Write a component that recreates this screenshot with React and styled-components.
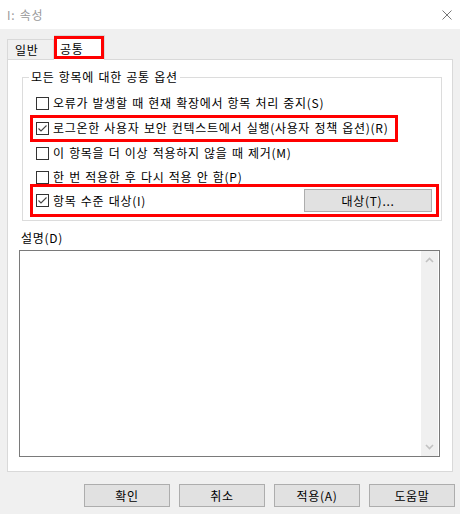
import React from 'react'
import styled, { createGlobalStyle } from 'styled-components'

const GlobalStyle = createGlobalStyle`
  html, body {
    margin: 0;
    padding: 0;
    background: #f0f0f0;
  }
  body {
    font-family: "Noto Sans CJK KR", "Noto Sans", sans-serif;
    font-size: 12px;
    letter-spacing: 0.7px;
    word-spacing: 1px;
    color: #000;
  }
`

const Window = styled.div`
  width: 460px;
  height: 514px;
  display: flex;
  flex-direction: column;
  background: #f0f0f0;
  overflow: hidden;
`

const TitleBar = styled.div`
  height: 29px;
  background: #fff;
  display: flex;
  align-items: center;
  justify-content: space-between;
  padding: 0 8px 0 7px;
`

const Title = styled.span`
  color: #9a9a9a;
  line-height: 16px;
`

const CloseIcon = () => (
  <svg width="10" height="10" viewBox="0 0 10 10">
    <path d="M0.5 0.5 L9.5 9.5 M9.5 0.5 L0.5 9.5" stroke="#777" strokeWidth="1" fill="none" />
  </svg>
)

const Body = styled.div`
  padding: 0 7px;
  display: flex;
  flex-direction: column;
`

const TabStrip = styled.div`
  height: 30px;
  display: flex;
  align-items: flex-end;
`

const Tab = styled.div`
  position: relative;
  box-sizing: border-box;
  width: ${({ w }) => w}px;
  height: ${({ active }) => (active ? '25px' : '20px')};
  margin-bottom: ${({ active }) => (active ? '-1px' : '0')};
  padding-left: ${({ active }) => (active ? '6px' : '7px')};
  border: 1px solid #d9d9d9;
  border-bottom: none;
  border-left: ${({ active }) => (active ? 'none' : '1px solid #d9d9d9')};
  background: ${({ active }) => (active ? '#fff' : '#f0f0f0')};
  z-index: ${({ active }) => (active ? 1 : 0)};
  display: flex;
  align-items: center;

  ${({ highlight }) =>
    highlight &&
    `
    &::after {
      content: '';
      position: absolute;
      left: 0;
      top: 0;
      right: 0;
      bottom: 1px;
      border: 3px solid #ff0000;
    }
  `}
`

const Panel = styled.div`
  box-sizing: border-box;
  height: 413px;
  background: #fff;
  border: 1px solid #d9d9d9;
  display: flex;
  flex-direction: column;
`

const GroupBox = styled.fieldset`
  margin: 9px 10px 0 14px;
  padding: 0 9px 8px 6px;
  border: 1px solid #dcdcdc;
  min-width: 0;
`

const Legend = styled.legend`
  padding: 0 2px;
  line-height: 16px;
`

const Rows = styled.div`
  padding: 6px 0 0 7px;
  display: flex;
  flex-direction: column;
`

const Row = styled.div`
  position: relative;
  height: ${({ h }) => h}px;
  display: flex;
  align-items: center;

  ${({ highlight }) =>
    highlight &&
    `
    &::after {
      content: '';
      position: absolute;
      left: ${highlight.left}px;
      top: ${highlight.top}px;
      right: ${highlight.right}px;
      bottom: ${highlight.bottom}px;
      border: 3px solid #ff0000;
      pointer-events: none;
    }
  `}
`

const Box = styled.span`
  box-sizing: border-box;
  width: 13px;
  height: 13px;
  border: 1px solid #333;
  background: #fff;
  display: flex;
  align-items: center;
  justify-content: center;
  flex: none;
`

const Label = styled.span`
  margin-left: 4px;
  line-height: 16px;
  white-space: nowrap;
`

const Check = ({ checked, children }) => (
  <>
    <Box>
      {checked && (
        <svg width="11" height="11" viewBox="0 0 11 11">
          <path d="M1.5 5.5 L4 8 L9.5 2.5" stroke="#444" strokeWidth="1.1" fill="none" />
        </svg>
      )}
    </Box>
    <Label>{children}</Label>
  </>
)

const Button = styled.button`
  box-sizing: border-box;
  width: ${({ w }) => w}px;
  height: 23px;
  margin-left: ${({ push }) => (push ? 'auto' : '0')};
  background: #e1e1e1;
  border: 1px solid #adadad;
  font-family: inherit;
  font-size: 12px;
  letter-spacing: inherit;
  word-spacing: inherit;
  color: #000;
  padding: 0;
`

const Description = styled.div`
  padding: 9px 12px 0 11px;
  display: flex;
  flex-direction: column;
`

const DescLabel = styled.div`
  padding-left: 2px;
  height: 20px;
  line-height: 16px;
`

const TextBox = styled.div`
  box-sizing: border-box;
  height: 207px;
  border: 1px solid #7a7a7a;
  background: #fff;
  display: flex;
  justify-content: flex-end;
  padding: 0 1px 0 0;
`

const ScrollBar = styled.div`
  width: 17px;
  background: #f0f0f0;
  display: flex;
  flex-direction: column;
  justify-content: space-between;
  align-items: center;
  padding: 6px 0;
`

const Chevron = ({ down }) => (
  <svg width="9" height="6" viewBox="0 0 9 6">
    <path
      d={down ? 'M1 1 L4.5 4.5 L8 1' : 'M1 5 L4.5 1.5 L8 5'}
      stroke="#c2c2c2"
      strokeWidth="1.6"
      fill="none"
    />
  </svg>
)

const Footer = styled.div`
  display: flex;
  justify-content: flex-end;
  gap: 9px;
  padding-top: 12px;
  margin-right: -2px;
`

export default function App() {
  return (
    <Window>
      <GlobalStyle />
      <TitleBar>
        <Title>I: 속성</Title>
        <CloseIcon />
      </TitleBar>
      <Body>
        <TabStrip>
          <Tab w={47}>일반</Tab>
          <Tab w={51} active highlight>
            공통
          </Tab>
        </TabStrip>
        <Panel>
          <GroupBox>
            <Legend>모든 항목에 대한 공통 옵션</Legend>
            <Rows>
              <Row h={24}>
                <Check>오류가 발생할 때 현재 확장에서 항목 처리 중지(S)</Check>
              </Row>
              <Row h={26} highlight={{ left: -6, top: 0, right: 34, bottom: -1 }}>
                <Check checked>로그온한 사용자 보안 컨텍스트에서 실행(사용자 정책 옵션)(R)</Check>
              </Row>
              <Row h={24}>
                <Check>이 항목을 더 이상 적용하지 않을 때 제거(M)</Check>
              </Row>
              <Row h={24}>
                <Check>한 번 적용한 후 다시 적용 안 함(P)</Check>
              </Row>
              <Row h={23} highlight={{ left: -6, top: -5, right: -7, bottom: -5 }}>
                <Check checked>항목 수준 대상(I)</Check>
                <Button w={128} push>
                  대상(T)...
                </Button>
              </Row>
            </Rows>
          </GroupBox>
          <Description>
            <DescLabel>설명(D)</DescLabel>
            <TextBox>
              <ScrollBar>
                <Chevron />
                <Chevron down />
              </ScrollBar>
            </TextBox>
          </Description>
        </Panel>
        <Footer>
          <Button w={86}>확인</Button>
          <Button w={86}>취소</Button>
          <Button w={86}>적용(A)</Button>
          <Button w={86}>도움말</Button>
        </Footer>
      </Body>
    </Window>
  )
}
